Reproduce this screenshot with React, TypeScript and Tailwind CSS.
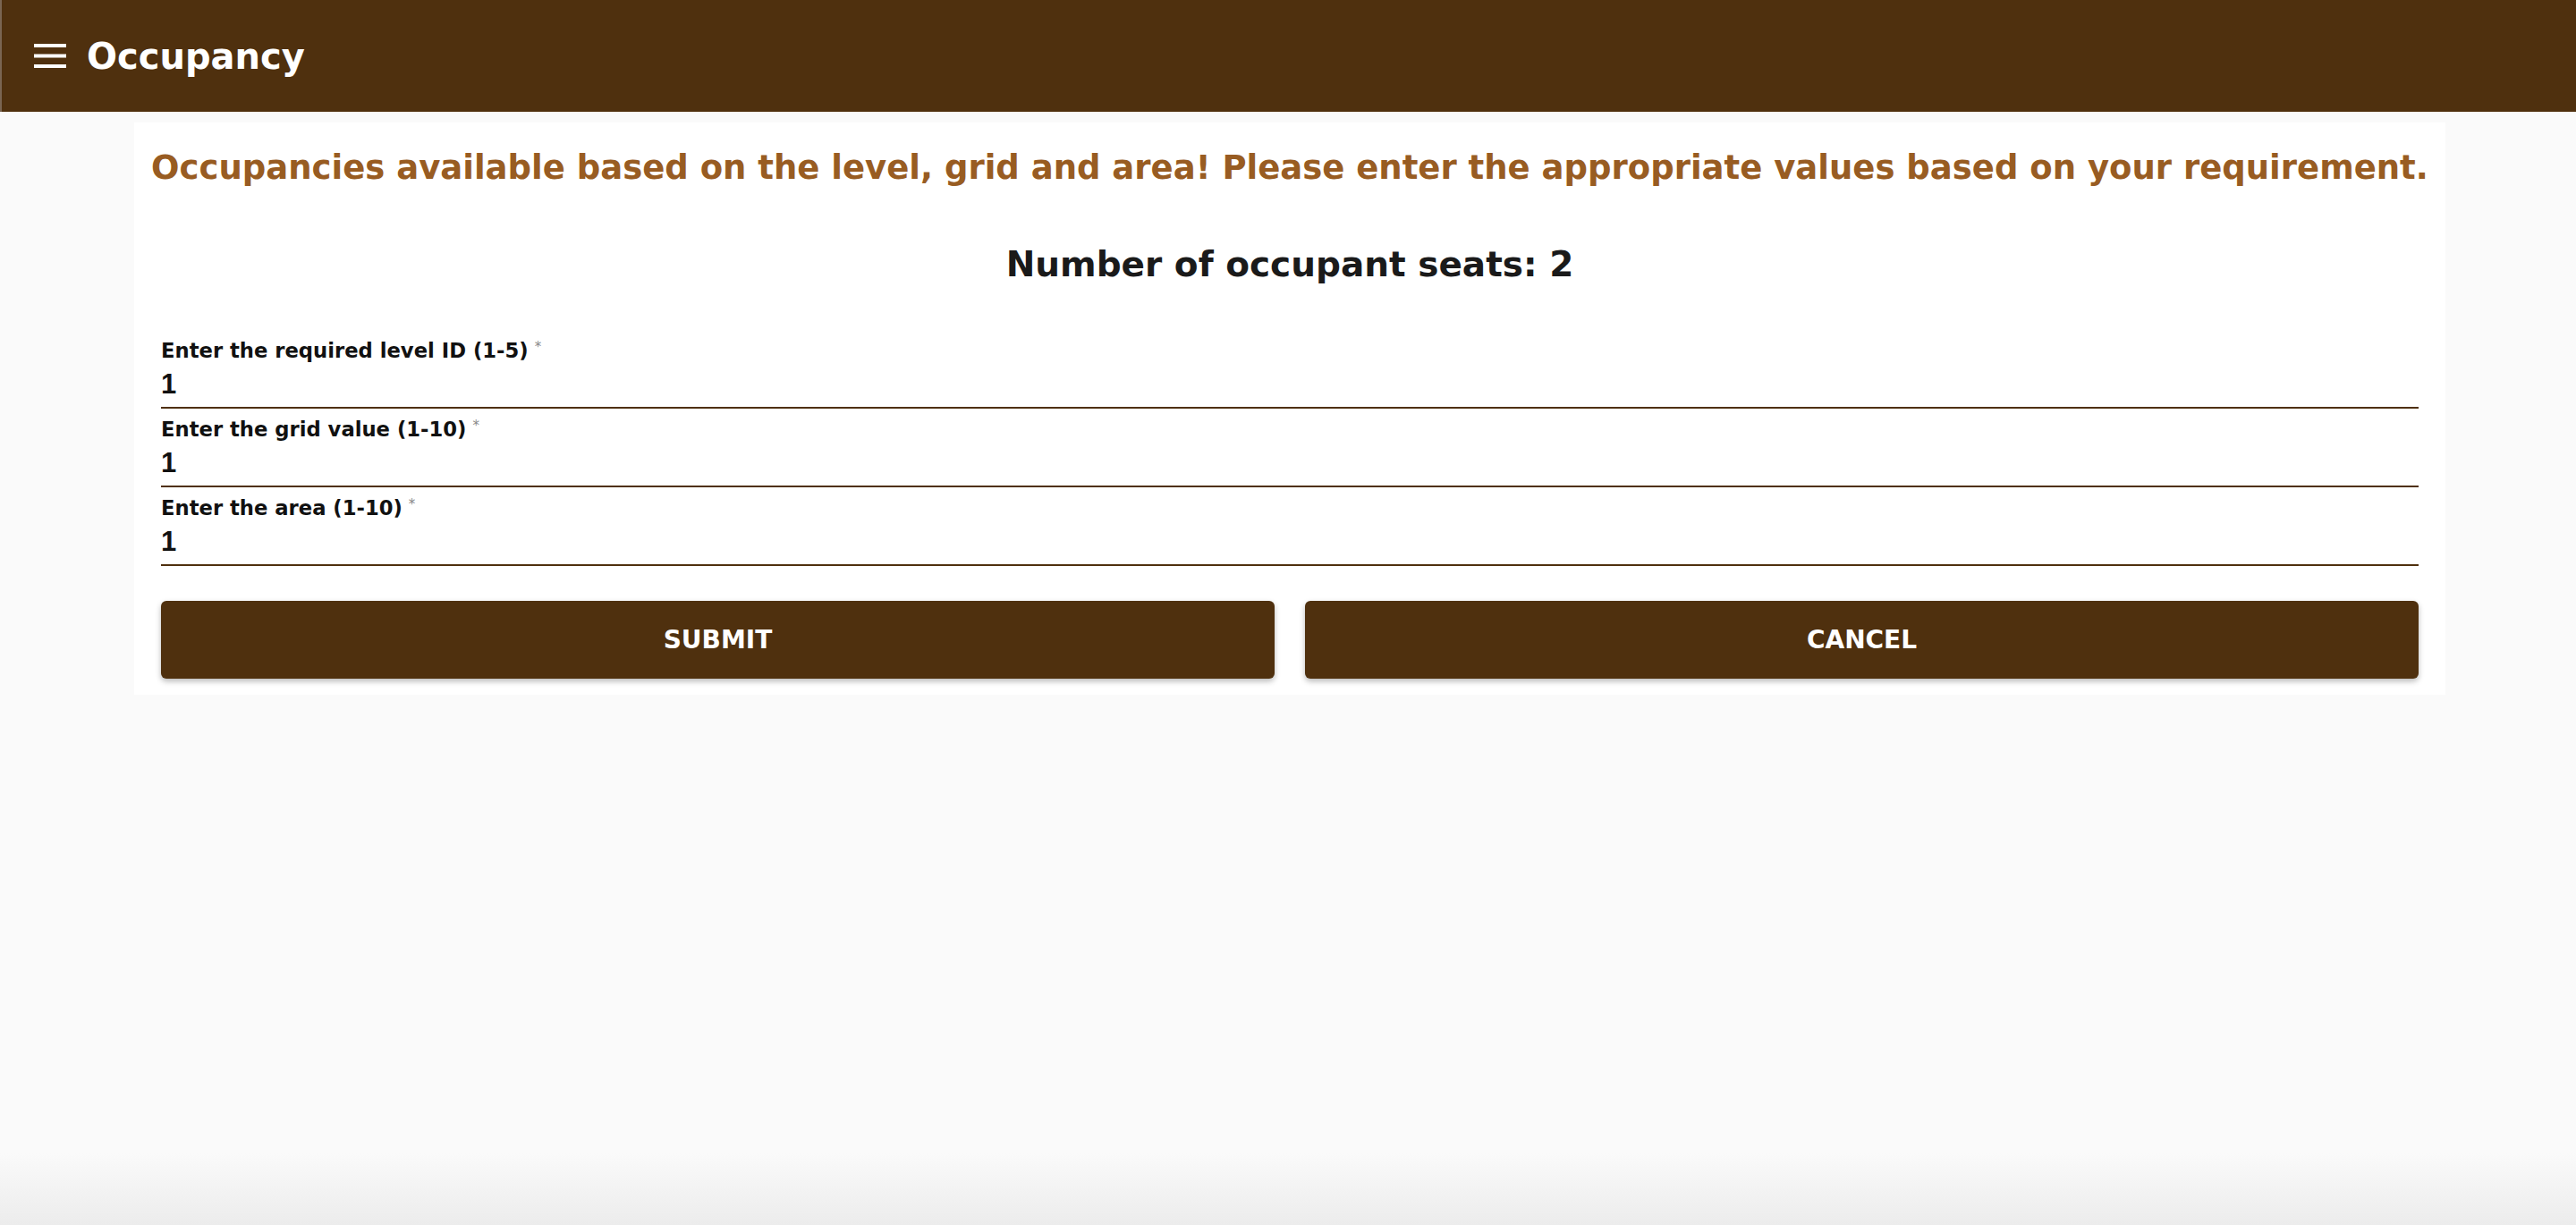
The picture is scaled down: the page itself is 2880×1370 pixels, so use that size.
import React from "react";

const fields = [
  { label: "Enter the required level ID (1-5)", value: "1" },
  { label: "Enter the grid value (1-10)", value: "1" },
  { label: "Enter the area (1-10)", value: "1" },
];

const MenuIcon = () => (
  <svg width="36" height="28" viewBox="0 0 36 28" fill="#ffffff">
    <rect x="0" y="0" width="36" height="4" />
    <rect x="0" y="11.5" width="36" height="4" />
    <rect x="0" y="23" width="36" height="4" />
  </svg>
);

export default function App() {
  return (
    <div className="h-[1370px] flex flex-col bg-[#fafafa] font-['DejaVu_Sans',sans-serif] overflow-hidden">
      {/* App bar */}
      <header className="h-[125px] shrink-0 flex items-center pl-[36px] bg-[#4f300e] border-l-2 border-[#7a6552]">
        <MenuIcon />
        <h1 className="ml-[23px] text-[40px] leading-[48px] font-bold text-white">
          Occupancy
        </h1>
      </header>

      {/* Form card */}
      <main className="mt-[12px] ml-[150px] w-[2584px] bg-white px-[30px] pt-[27px] pb-[18px]">
        <p className="-mx-[20px] whitespace-nowrap text-center text-[37px] leading-[48px] font-bold text-[#985c22]">
          Occupancies available based on the level, grid and area! Please enter
          the appropriate values based on your requirement.
        </p>

        <h2 className="mt-[60px] text-center text-[39px] leading-[48px] font-bold text-[#1a1a1a]">
          Number of occupant seats: 2
        </h2>

        <div className="mt-[58px] flex flex-col gap-[9px]">
          {fields.map((f) => (
            <div key={f.label}>
              <label className="flex items-start h-[28px] text-[22.7px] leading-[28px] font-bold text-[#111111]">
                {f.label}
                <span className="ml-[7px] text-[15px] leading-[20px] font-normal text-[#8a8a8a]">
                  *
                </span>
              </label>
              <div className="mt-[6px] pb-[7px] border-b-2 border-[#4f300e]">
                <div className="h-[36px] text-[31px] leading-[36px] font-bold text-[#111111] font-['Liberation_Sans',sans-serif]">
                  {f.value}
                </div>
              </div>
            </div>
          ))}
        </div>

        <div className="mt-[39px] flex gap-[34px]">
          {["Submit", "Cancel"].map((b) => (
            <button
              key={b}
              className="flex-1 h-[87px] rounded-[6px] bg-[#4f300e] text-white text-[28px] font-bold uppercase shadow-[0_3px_6px_rgba(0,0,0,0.28)]"
            >
              {b}
            </button>
          ))}
        </div>
      </main>

      <div className="mt-auto h-[80px] bg-linear-to-b from-[#fafafa] to-[#ececec]" />
    </div>
  );
}
